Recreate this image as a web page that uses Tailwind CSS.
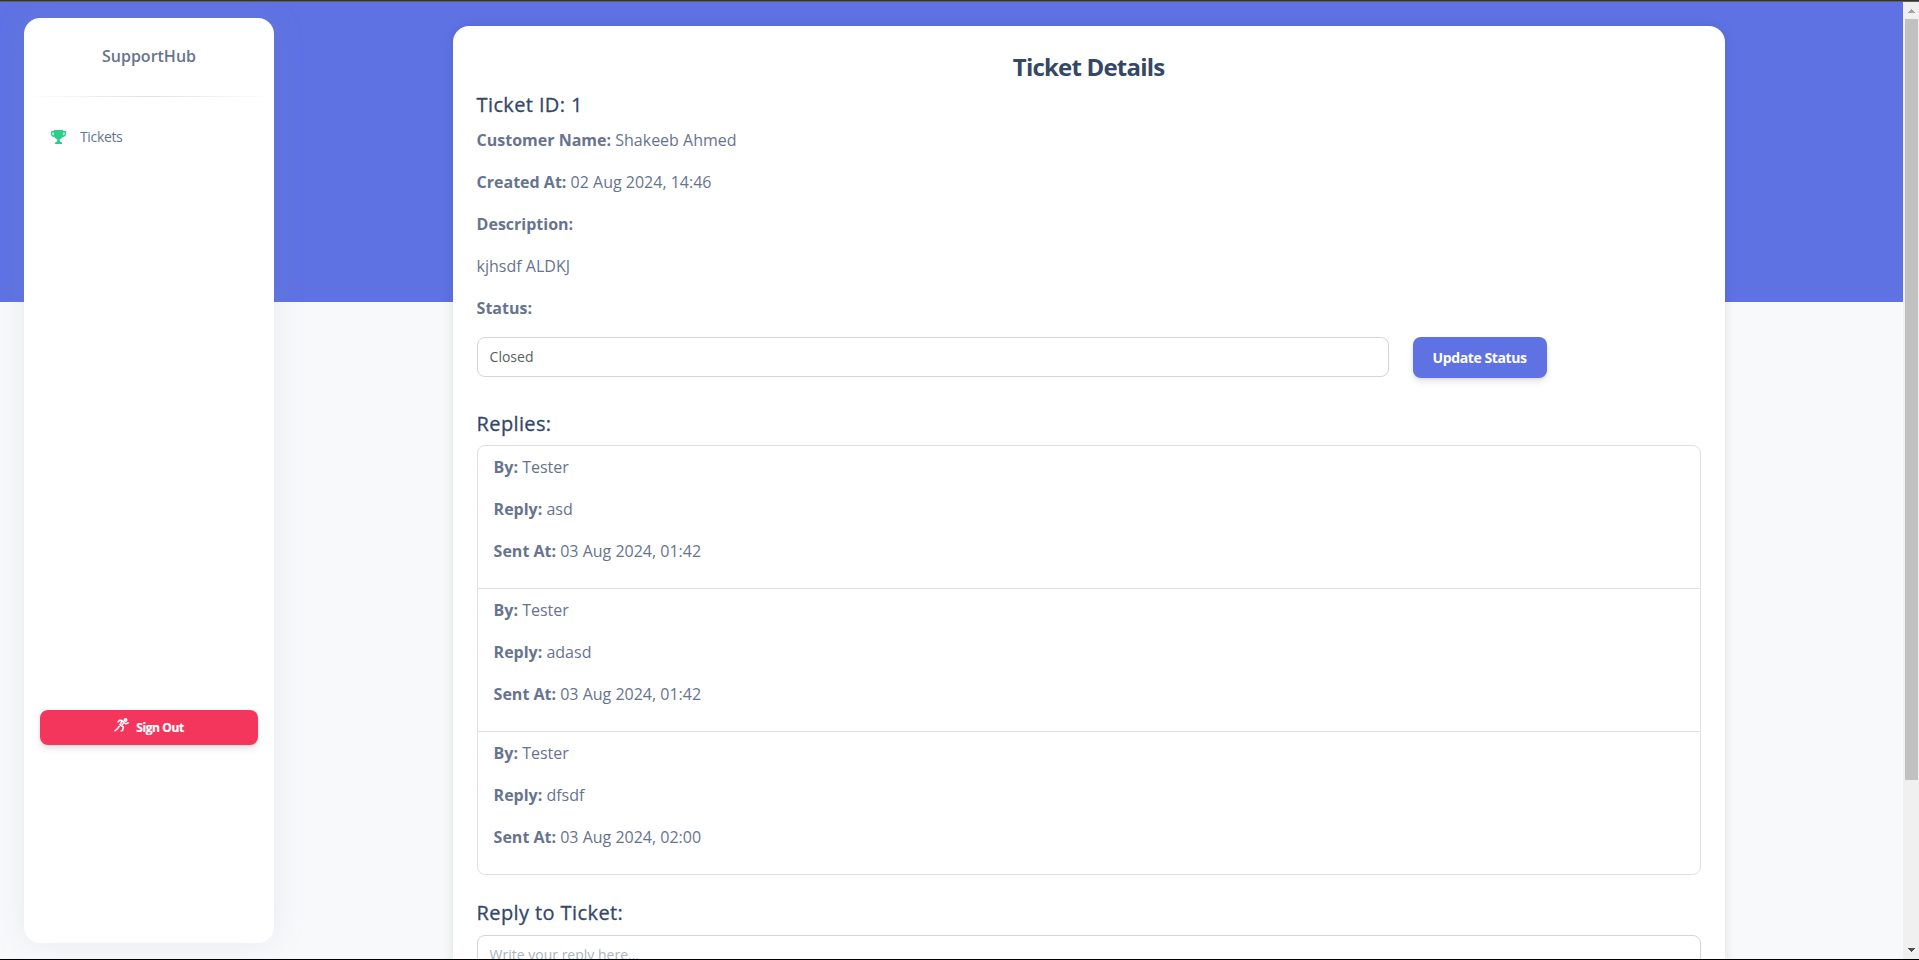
<!DOCTYPE html>
<html lang="en">
<head>
<meta charset="utf-8">
<title>SupportHub</title>
<script src="https://cdn.jsdelivr.net/npm/@tailwindcss/browser@4"></script>
</head>
<body class="h-[960px] overflow-hidden bg-[#f8f9fa] font-['Open_Sans',sans-serif] text-base leading-[26px] text-[#67748e]">
<div class="flex h-[960px] flex-col border-b border-black">
  <div class="h-px shrink-0 bg-[#333]"></div>
  <div class="h-px shrink-0 bg-[#5f5f5f]"></div>
  <div class="flex min-h-0 flex-1">
    <div class="flex min-w-0 flex-1 items-start overflow-hidden bg-[linear-gradient(#5e72e4_300px,#f8f9fb_300px)] pl-6">
      <aside class="mt-4 flex h-[925px] w-[250px] shrink-0 flex-col rounded-2xl bg-white shadow-[0_0_32px_0_rgba(136,152,170,0.15)]">
        <div class="pt-[25px] text-center font-semibold">SupportHub</div>
        <div class="mt-[27px] h-px bg-linear-to-r from-transparent via-black/12 to-transparent"></div>
        <a class="mt-[27px] flex items-center pl-[27px] text-sm leading-[26px]">
          <svg class="h-[14px] w-[15px]" viewBox="0 0 15 14" fill="#2dce89">
            <path fill-rule="evenodd" d="M2.800 0h9.400v1h2.200q.6 0 .6.600V4q0 2.600-3.400 3.100Q10.600 8.900 8.800 9.400V11q0 .7.7.7 1.500 0 1.500 1.500V14H4v-.8q0-1.500 1.500-1.500.7 0 .7-.7V9.400Q4.400 8.900 3.400 7.100 0 6.600 0 4V1.600Q0 1 .6 1h2.200zM1.400 2.400V4q0 .9 1.200 1.400V2.400zM12.400 2.400v3q1.200-.5 1.200-1.400V2.400z"/>
          </svg>
          <span class="ml-[14px] tracking-[-0.35px]">Tickets</span>
        </a>
        <button class="mx-4 mt-[560px] flex h-[35px] items-center justify-center rounded-lg bg-[#f5365c] text-xs font-bold tracking-[-0.4px] text-white shadow-[0_4px_6px_rgba(50,50,93,0.11),0_1px_3px_rgba(0,0,0,0.08)] [-webkit-text-stroke:0.2px_#fff]">
          <svg class="mr-[7px] mb-[6px] h-[14px] w-[15px]" viewBox="0 0 15 14" fill="none" stroke="#fff" stroke-width="1.500" stroke-linecap="round" stroke-linejoin="round">
            <circle cx="11.500" cy="2" r="2" fill="#fff" stroke="none"/>
            <path d="M4 4l1.500-1.700 2.700.2 1.900 2.300 1.900 1 2.200-.9M8.300 3L5.900 6.600M9.900 4.600L7.700 7.600M5.900 6.800l3.500 2.200-.9 3.500-1.200.4M5 8.500L3.600 10.600 1 12.800"/>
          </svg>
          <span>Sign Out</span>
        </button>
      </aside>
      <main class="mt-6 ml-[178.600px] h-[1100px] w-[1272px] shrink-0 rounded-2xl bg-white p-6 shadow-[0_0_12px_rgba(0,0,0,0.1)]">
        <h2 class="mb-2 text-center text-2xl leading-[33px] font-bold tracking-[-0.8px] text-[#344767]">Ticket Details</h2>
        <h5 class="mb-2 text-xl leading-[27.5px] font-medium tracking-[0.37px] text-[#344767] [-webkit-text-stroke:0.3px_#344767]">Ticket ID: 1</h5>
        <p class="mb-4"><b>Customer Name:</b> Shakeeb Ahmed</p>
        <p class="mb-4"><b>Created At:</b> 02 Aug 2024, 14:46</p>
        <p class="mb-4"><b>Description:</b></p>
        <p class="mb-4">kjhsdf ALDKJ</p>
        <p class="mb-4"><b>Status:</b></p>
        <div class="mb-8 flex h-[41.5px] items-start gap-6">
          <div class="flex h-10 w-[912px] items-center rounded-lg border border-[#d2d6da] px-3 text-sm text-[#575d63]">Closed</div>
          <button class="h-[41px] w-[134px] rounded-lg bg-[#5e72e4] pt-[2px] text-sm font-bold tracking-[-0.4px] text-white shadow-[0_4px_6px_rgba(50,50,93,0.11),0_1px_3px_rgba(0,0,0,0.08)]">Update Status</button>
        </div>
        <h5 class="mb-[7.250px] text-xl leading-[27.5px] font-medium tracking-[0.37px] text-[#344767] [-webkit-text-stroke:0.3px_#344767]">Replies:</h5>
        <ul class="mb-6 divide-y divide-[#dee0e1] rounded-lg border border-[#dee0e1]">
          <li class="px-4 py-2"><p class="mb-4"><b>By:</b> Tester</p><p class="mb-4"><b>Reply:</b> asd</p><p class="mb-4"><b>Sent At:</b> 03 Aug 2024, 01:42</p></li>
          <li class="px-4 py-2"><p class="mb-4"><b>By:</b> Tester</p><p class="mb-4"><b>Reply:</b> adasd</p><p class="mb-4"><b>Sent At:</b> 03 Aug 2024, 01:42</p></li>
          <li class="px-4 py-2"><p class="mb-4"><b>By:</b> Tester</p><p class="mb-4"><b>Reply:</b> dfsdf</p><p class="mb-4"><b>Sent At:</b> 03 Aug 2024, 02:00</p></li>
        </ul>
        <h5 class="mb-[8.500px] text-xl leading-[27.5px] font-medium tracking-[0.4px] text-[#344767] [-webkit-text-stroke:0.3px_#344767]">Reply to Ticket:</h5>
        <div class="h-28 rounded-lg border border-[#d2d6da] px-3 py-2 text-sm leading-[22px] text-[#adb5bd]">Write your reply here...</div>
      </main>
    </div>
    <div class="flex w-4 shrink-0 flex-col items-center bg-[#f0f0f0]">
      <svg class="h-[17px] w-4 shrink-0" viewBox="0 0 16 17" fill="#a3a3a3" shape-rendering="crispEdges"><path d="M8 7h1v1h1v1h1v1h1v1H5v-1h1V9h1V8h1z"/></svg>
      <div class="h-[761px] w-[13px] bg-[#c1c1c1]"></div>
      <svg class="mt-auto h-[17px] w-4 shrink-0" viewBox="0 0 16 17" fill="#505050" shape-rendering="crispEdges"><path d="M5 6h7v1h-1v1h-1v1H9v1H8V9H7V8H6V7H5z"/></svg>
    </div>
  </div>
</div>
</body>
</html>
